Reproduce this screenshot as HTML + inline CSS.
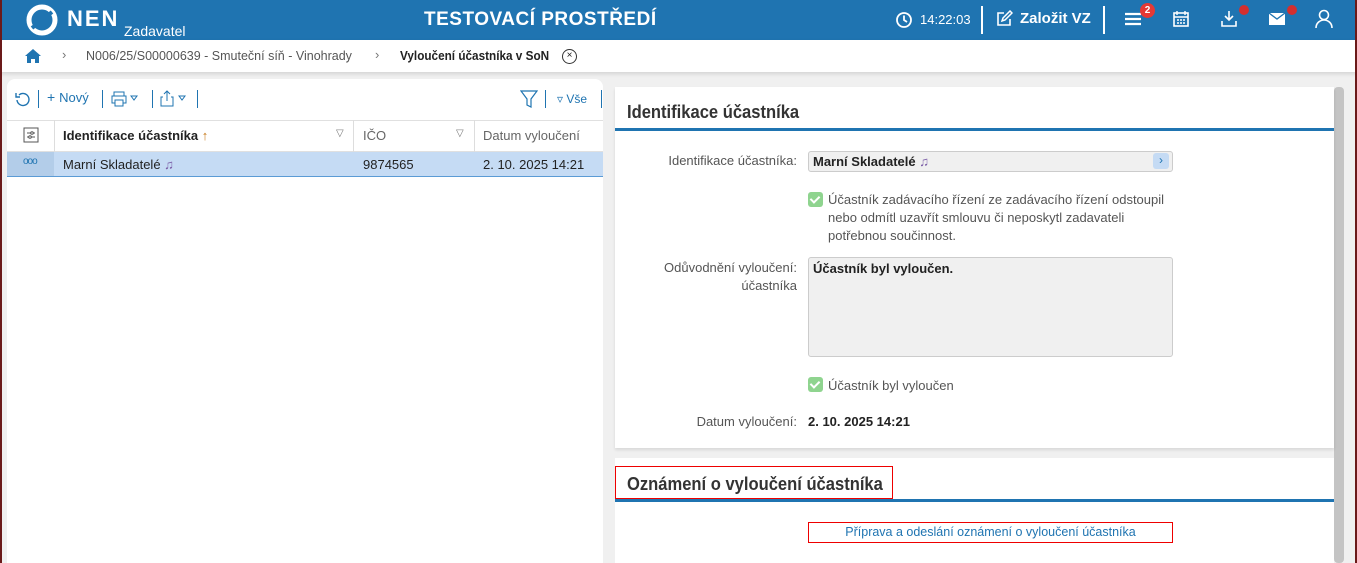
<!DOCTYPE html>
<html><head><meta charset="utf-8"><style>
*{box-sizing:border-box;margin:0;padding:0}
body{width:1357px;height:563px;overflow:hidden;background:#f0f0f0;font-family:"Liberation Sans",sans-serif;font-size:13px;color:#222;position:relative}
.abs{position:absolute}
#hdr{left:0;top:0;width:1357px;height:40px;background:#1f74b1;color:#fff}
#bc{left:0;top:40px;width:1357px;height:32px;background:#fff;box-shadow:0 2px 4px rgba(0,0,0,.12)}
.lbl{color:#555;text-align:right}
.cb{width:15px;height:15px;border-radius:3px;background:#8fd48f;display:inline-block;position:absolute}
.cb:after{content:"";position:absolute;left:4px;top:2px;width:4px;height:7px;border:solid #fff;border-width:0 2px 2px 0;transform:rotate(45deg)}
.sep{width:1px;height:18px;background:#1f74b1}
.hs{width:2px;height:28px;background:#fff;top:6px}
.nar{transform:scaleX(.92);transform-origin:left top;white-space:nowrap}
</style></head><body>
<div class="abs" style="left:0;top:0;width:2px;height:563px;background:#6b1a1a;z-index:5"></div>
<div class="abs" style="right:0;top:0;width:2px;height:563px;background:#6b1a1a;z-index:5"></div>
<div id="hdr" class="abs">
 <svg class="abs" style="left:26px;top:4px" width="34" height="32" viewBox="0 0 34 32"><circle cx="16" cy="16" r="13" fill="none" stroke="#fff" stroke-width="5"/><path d="M6 24 L26 8" stroke="#1f74b1" stroke-width="4"/></svg>
 <div class="abs" style="left:67px;top:6px;font-size:22px;font-weight:bold;letter-spacing:2px">NEN</div>
 <div class="abs" style="left:124px;top:23px;font-size:14px">Zadavatel</div>
 <div class="abs" style="left:424px;top:9px;font-size:19px;font-weight:bold;letter-spacing:.5px">TESTOVACÍ PROSTŘEDÍ</div>
 <svg class="abs" style="left:895px;top:11px" width="18" height="18"><circle cx="9" cy="9" r="7" fill="none" stroke="#fff" stroke-width="1.8"/><path d="M9 4.5V9l3 2" stroke="#fff" stroke-width="1.8" fill="none"/></svg>
 <div class="abs" style="left:920px;top:12px;font-size:13px">14:22:03</div>
 <div class="abs hs" style="left:981px"></div>
 <svg class="abs" style="left:995px;top:10px" width="18" height="18"><path d="M9 3H3v12h12V9" stroke="#fff" stroke-width="1.6" fill="none"/><path d="M7 11l1-3 7-7 2 2-7 7z" stroke="#fff" stroke-width="1.5" fill="none"/></svg>
 <div class="abs" style="left:1020px;top:10px;font-size:15px;font-weight:bold">Založit VZ</div>
 <div class="abs hs" style="left:1103px"></div>
 <svg class="abs" style="left:1125px;top:12px" width="16" height="14"><path d="M0 2h16M0 7h16M0 12h16" stroke="#fff" stroke-width="2.2"/></svg>
 <div class="abs" style="left:1140px;top:3px;width:15px;height:15px;border-radius:50%;background:#e53935;font-size:10px;font-weight:bold;text-align:center;line-height:15px">2</div>
 <svg class="abs" style="left:1172px;top:10px" width="18" height="18"><rect x="2" y="3" width="14" height="13" fill="none" stroke="#fff" stroke-width="1.6"/><path d="M2 7h14M5 1v4M13 1v4M5 10h2M8 10h2M11 10h2M5 13h2M8 13h2M11 13h2" stroke="#fff" stroke-width="1.4"/></svg>
 <svg class="abs" style="left:1220px;top:10px" width="18" height="18"><path d="M9 1v9M5 6l4 4 4-4M2 11v5h14v-5" stroke="#fff" stroke-width="1.6" fill="none"/></svg>
 <div class="abs" style="left:1239px;top:5px;width:10px;height:10px;border-radius:50%;background:#d32f2f"></div>
 <svg class="abs" style="left:1268px;top:12px" width="18" height="14"><rect x="1" y="1" width="16" height="12" fill="#fff"/><path d="M1 1l8 6 8-6" stroke="#1f74b1" stroke-width="1.3" fill="none"/></svg>
 <div class="abs" style="left:1287px;top:5px;width:10px;height:10px;border-radius:50%;background:#d32f2f"></div>
 <svg class="abs" style="left:1315px;top:9px" width="18" height="20"><circle cx="9" cy="6" r="4.5" fill="none" stroke="#fff" stroke-width="1.6"/><path d="M1 19c0-5 4-8 8-8s8 3 8 8" fill="none" stroke="#fff" stroke-width="1.6"/></svg>
</div>
<div id="bc" class="abs">
 <svg class="abs" style="left:24px;top:8px" width="18" height="16"><path d="M9 1L1 8h2v7h4v-4h4v4h4V8h2z" fill="#1f74b1"/></svg>
 <div class="abs" style="left:62px;top:7px;color:#777">&#x203A;</div>
 <div class="abs" style="left:86px;top:9px;color:#555;font-size:12.5px">N006/25/S00000639 - Smuteční síň - Vinohrady</div>
 <div class="abs" style="left:375px;top:7px;color:#777">&#x203A;</div>
 <div class="abs nar" style="left:400px;top:9px;font-size:12.5px;font-weight:bold;color:#222;transform:scaleX(.94)">Vyloučení účastníka v SoN</div>
 <div class="abs" style="left:562px;top:9px;width:15px;height:15px;border:1px solid #333;border-radius:50%;font-size:10px;text-align:center;line-height:12px">×</div>
</div>
<!-- left panel -->
<div class="abs" style="left:7px;top:79px;width:596px;height:484px;background:#fff;border-radius:8px 8px 0 0">
 <svg class="abs" style="left:8px;top:12px" width="16" height="16"><path d="M4 4a6 6 0 1 1-2 5" fill="none" stroke="#1f74b1" stroke-width="1.4"/><path d="M1 2v4h4" fill="none" stroke="#1f74b1" stroke-width="1.4"/></svg>
 <div class="abs sep" style="left:31px;top:11px"></div>
 <div class="abs" style="left:40px;top:10px;color:#1f74b1;font-size:14px">+ <span style="font-size:13px">Nový</span></div>
 <div class="abs sep" style="left:95px;top:11px"></div>
 <svg class="abs" style="left:104px;top:12px" width="30" height="16"><rect x="3" y="1" width="10" height="4" fill="none" stroke="#1f74b1"/><rect x="1" y="5" width="14" height="7" fill="none" stroke="#1f74b1"/><rect x="4" y="9" width="8" height="6" fill="#fff" stroke="#1f74b1"/><path d="M20 5l3 4 3-4z" fill="none" stroke="#1f74b1"/></svg>
 <div class="abs sep" style="left:145px;top:11px"></div>
 <svg class="abs" style="left:153px;top:11px" width="30" height="17"><path d="M3 7H1v9h12V7h-2M7 11V1M4 4l3-3 3 3" fill="none" stroke="#1f74b1"/><path d="M19 6l3 4 3-4z" fill="none" stroke="#1f74b1"/></svg>
 <div class="abs sep" style="left:190px;top:11px"></div>
 <svg class="abs" style="left:513px;top:11px" width="18" height="18"><path d="M1 1h16l-6 8v8l-4-2V9z" fill="none" stroke="#1f74b1" stroke-width="1.2"/></svg>
 <div class="abs sep" style="left:538px;top:11px"></div>
 <div class="abs" style="left:550px;top:13px;color:#1f74b1;font-size:12px">&#x25BF; Vše</div>
 <div class="abs sep" style="left:594px;top:11px"></div>
 <div class="abs" style="left:0;top:41px;width:596px;height:32px;border-top:1px solid #e0e0e0;border-bottom:1px solid #e0e0e0;background:#fff"></div>
 <div class="abs" style="left:47px;top:41px;width:1px;height:57px;background:#ddd"></div>
 <div class="abs" style="left:346px;top:41px;width:1px;height:32px;background:#ddd"></div>
 <div class="abs" style="left:467px;top:41px;width:1px;height:32px;background:#ddd"></div>
 <svg class="abs" style="left:16px;top:48px" width="16" height="16"><rect x="1" y="1" width="14" height="14" fill="none" stroke="#555"/><path d="M4 6h8M4 10h8" stroke="#555"/><circle cx="9" cy="6" r="1.3" fill="#fff" stroke="#555"/><circle cx="7" cy="10" r="1.3" fill="#fff" stroke="#555"/></svg>
 <div class="abs" style="left:56px;top:49px;font-weight:bold;font-size:13px">Identifikace účastníka <span style="color:#c77a1a;font-weight:normal">&#x2191;</span></div>
 <div class="abs" style="left:329px;top:49px;color:#777;font-size:10px">&#x25BD;</div>
 <div class="abs" style="left:356px;top:49px;color:#666">IČO</div>
 <div class="abs" style="left:449px;top:49px;color:#777;font-size:10px">&#x25BD;</div>
 <div class="abs" style="left:476px;top:49px;color:#666">Datum vyloučení</div>
 <div class="abs" style="left:0;top:73px;width:596px;height:25px;background:#c5dbf4;border-bottom:1px solid #5b9bd5"></div>
 <div class="abs" style="left:0;top:73px;width:47px;height:24px;background:#b3cde9"></div>
 <div class="abs" style="left:16px;top:77px;color:#1f74b1;font-size:10px;letter-spacing:-1px">ooo</div>
 <div class="abs" style="left:56px;top:78px">Marní Skladatelé <span style="color:#7b5ea7">&#x266B;</span></div>
 <div class="abs" style="left:356px;top:78px">9874565</div>
 <div class="abs" style="left:476px;top:78px">2. 10. 2025 14:21</div>
</div>
<!-- right panel -->
<div class="abs" style="left:1334px;top:87px;width:10px;height:476px;background:#c4c4c4;border-radius:4px"></div>
<div class="abs" style="left:615px;top:87px;width:719px;height:361px;background:#fff;box-shadow:0 2px 3px rgba(0,0,0,.1)">
 <div class="abs nar" style="left:12px;top:15px;font-size:18px;font-weight:bold;color:#333">Identifikace účastníka</div>
 <div class="abs" style="left:0;top:41px;width:719px;height:3px;background:#1f74b1"></div>
 <div class="abs lbl" style="left:0;top:66px;width:182px">Identifikace účastníka:</div>
 <div class="abs" style="left:193px;top:64px;width:365px;height:21px;background:#f0f0f0;border:1px solid #ccc;border-radius:3px"></div>
 <div class="abs" style="left:198px;top:67px;font-weight:bold">Marní Skladatelé <span style="color:#7b5ea7">&#x266B;</span></div>
 <div class="abs" style="left:538px;top:66px;width:16px;height:16px;background:#c5dbf4;border-radius:3px;color:#1f74b1;text-align:center;line-height:15px;font-size:12px">&#x203A;</div>
 <div class="cb" style="left:193px;top:105px"></div>
 <div class="abs" style="left:213px;top:104px;width:350px;color:#555;line-height:18px">Účastník zadávacího řízení ze zadávacího řízení odstoupil nebo odmítl uzavřít smlouvu či neposkytl zadavateli potřebnou součinnost.</div>
 <div class="abs lbl" style="left:0;top:172px;width:182px;line-height:18px">Odůvodnění vyloučení:<br>účastníka</div>
 <div class="abs" style="left:193px;top:170px;width:365px;height:100px;background:#f0f0f0;border:1px solid #ccc;border-radius:3px"></div>
 <div class="abs" style="left:198px;top:174px;font-weight:bold">Účastník byl vyloučen.</div>
 <div class="cb" style="left:193px;top:290px"></div>
 <div class="abs" style="left:213px;top:291px;color:#555">Účastník byl vyloučen</div>
 <div class="abs lbl" style="left:0;top:327px;width:182px">Datum vyloučení:</div>
 <div class="abs" style="left:193px;top:327px;font-weight:bold">2. 10. 2025 14:21</div>
</div>
<div class="abs" style="left:615px;top:458px;width:719px;height:105px;background:#fff">
 <div class="abs" style="left:0;top:8px;width:278px;height:33px;border:1px solid #e00"></div>
 <div class="abs nar" style="left:12px;top:16px;font-size:18px;font-weight:bold;color:#333">Oznámení o vyloučení účastníka</div>
 <div class="abs" style="left:0;top:41px;width:719px;height:3px;background:#1f74b1"></div>
 <div class="abs" style="left:193px;top:64px;width:365px;height:21px;border:1px solid #e00;color:#1f74b1;text-align:center;line-height:19px;font-size:12.5px">Příprava a odeslání oznámení o vyloučení účastníka</div>
</div>
</body></html>
